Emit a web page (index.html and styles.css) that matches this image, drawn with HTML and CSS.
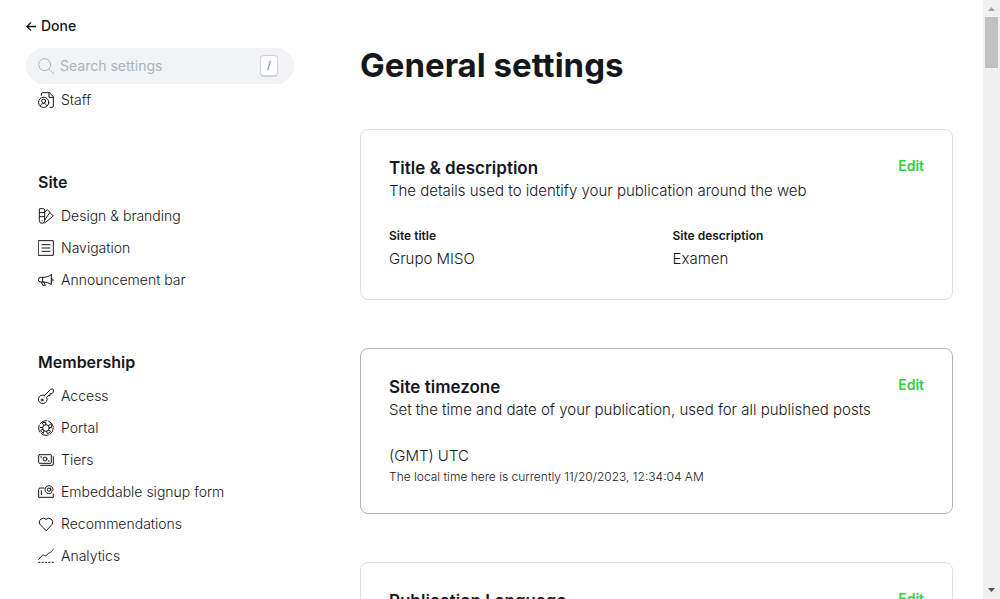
FILE: index.html
```html
<!DOCTYPE html>
<html lang="en">
<head>
<meta charset="utf-8">
<meta name="viewport" content="width=device-width, initial-scale=1">
<title>Settings</title>
<link rel="stylesheet" href="styles.css">
</head>
<body>
<div class="app">
  <aside class="sidebar">
    <button class="done" type="button">
      <svg class="done-icon" viewBox="0 0 24 24"><path d="M22 12H3M11 3L2 12l9 9"/></svg>
      Done
    </button>
    <div class="search">
      <svg class="icon search-icon" viewBox="0 0 24 24"><circle cx="10" cy="10" r="9"/><path d="M16.500 16.500L23.500 23.500"/></svg>
      <input class="search-input" type="text" placeholder="Search settings" aria-label="Search settings">
      <kbd class="key">/</kbd>
    </div>
    <nav class="nav">
      <div class="group">
        <a class="item" href="#staff"><svg class="icon" viewBox="0 0 24 24"><path d="M5 5V3a2 2 0 0 1 2-2h10l6 6v14a2 2 0 0 1-2 2h-3M16.500 1v7H23"/><circle cx="8.500" cy="15.500" r="7.700"/><circle cx="8.500" cy="13.500" r="3"/><path d="M3.500 20.500c2-4.500 8-4.500 10 0"/></svg>Staff</a>
      </div>
      <div class="group">
        <h2 class="group-title">Site</h2>
        <a class="item" href="#design"><svg class="icon" viewBox="0 0 24 24"><path d="M3 1h5a2 2 0 0 1 2 2v16a4 4 0 0 1-8 0V2zM2 7h8M2 13h8M10 6l4-3.500 4 4L10 18M18 7l5 5L10 22.500M6 19v.5"/></svg>Design &amp; branding</a>
        <a class="item" href="#navigation"><svg class="icon" viewBox="0 0 24 24"><path d="M1 1h22v22H1zM6 7h12M6 12h12M6 17h12"/></svg>Navigation</a>
        <a class="item" href="#announcement"><svg class="icon" viewBox="0 0 24 24"><path d="M20 4v15C16 16 12 15 7 15H4a3.200 3.200 0 0 1 0-7h3c5 0 9-1 13-4zM7 8v7M20 10c4 0 4 4 0 4M5 15l2 5h4l-2-4.500"/></svg>Announcement bar</a>
      </div>
      <div class="group">
        <h2 class="group-title">Membership</h2>
        <a class="item" href="#access"><svg class="icon" viewBox="0 0 24 24"><path d="M10 11L19 2q4-2 4 1v3l-2 2.500h-3v3h-3l-2 2.500a6.500 6.500 0 1 1-3-3z"/><circle cx="6" cy="18" r="1.500"/></svg>Access</a>
        <a class="item" href="#portal"><svg class="icon" viewBox="0 0 24 24"><circle cx="12" cy="12" r="11" stroke-dasharray="11 2.820"/><circle cx="12" cy="12" r="5"/><path d="M8 7L6 4.500Q9 3 12 4l-.5 3M16 8.500l3-3q2 2.500 1.500 6L17 11.500M16 15.500l3 1.500q-2 3-5 3.500L13 17M9 16.500l-1 3.500Q5 18 4 15.500l3-1.500M7 11l-3.500.5"/></svg>Portal</a>
        <a class="item" href="#tiers"><svg class="icon" viewBox="0 0 24 24"><rect x="1" y="4" width="19" height="13" rx="1"/><circle cx="10.500" cy="10.500" r="3"/><path d="M4 7.500h1.500M15.500 13.500H17M23 7v11a2 2 0 0 1-2 2H4"/></svg>Tiers</a>
        <a class="item" href="#signup"><svg class="icon" viewBox="0 0 24 24"><path d="M9 6H3a2 2 0 0 0-2 2v12h22v-5M5 10v6"/><path d="M20.500 13a6 6 0 1 1 2-4.500c0 3-3.500 3-3.500 0V6"/><circle cx="16.500" cy="8.500" r="2.500"/></svg>Embeddable signup form</a>
        <a class="item" href="#recommendations"><svg class="icon" viewBox="0 0 24 24"><path d="M12 21.800L2.500 12A6 6 0 0 1 12 5a6 6 0 0 1 9.500 7z"/></svg>Recommendations</a>
        <a class="item" href="#analytics"><svg class="icon" viewBox="0 0 24 24"><path d="M1 17l5.500-6c1-1 2-.8 3 0s2.500 1 3.500 0L15.500 8c1-1 2-.5 3-1S20.500 4 23 2M1 21.500h2M6 21.500h2M11 21.500h2M16 21.500h2M21 21.500h2"/></svg>Analytics</a>
      </div>
    </nav>
  </aside>
  <main class="content">
    <h1 class="page-title">General settings</h1>
    <section class="card">
      <header class="card-head">
        <div><h2 class="card-title">Title &amp; description</h2><p class="text">The details used to identify your publication around the web</p></div>
        <button class="edit" type="button">Edit</button>
      </header>
      <dl class="fields">
        <div><dt class="label">Site title</dt><dd class="text value">Grupo MISO</dd></div>
        <div><dt class="label">Site description</dt><dd class="text value">Examen</dd></div>
      </dl>
    </section>
    <section class="card card-active">
      <header class="card-head">
        <div><h2 class="card-title">Site timezone</h2><p class="text">Set the time and date of your publication, used for all published posts</p></div>
        <button class="edit" type="button">Edit</button>
      </header>
      <div><p class="text">(GMT) UTC</p><p class="hint">The local time here is currently 11/20/2023, 12:34:04 AM</p></div>
    </section>
    <section class="card">
      <header class="card-head">
        <div><h2 class="card-title">Publication Language</h2></div>
        <button class="edit" type="button">Edit</button>
      </header>
    </section>
  </main>
  <div class="scrollbar" aria-hidden="true">
    <svg class="arrow" viewBox="0 0 17 17"><path fill="#a3a3a3" d="M5 11l3.500-4 3.500 4z"/></svg>
    <div class="thumb"></div>
    <svg class="arrow arrow-down" viewBox="0 0 17 17"><path fill="#505050" d="M5 6h7l-3.500 4z"/></svg>
  </div>
</div>
</body>
</html>
```
FILE: styles.css
```css
* { box-sizing: border-box; }
body, h1, h2, p, dl, dd { margin: 0; }
body { font-family: Inter, "Liberation Sans", sans-serif; color: #15171a; background: #fff; }
button { border: 0; padding: 0; background: none; font: inherit; color: inherit; cursor: pointer; }
.app { display: flex; height: 100vh; overflow: hidden; }
.sidebar { flex: 0 0 294px; min-width: 0; padding: 16px 0 0 26px; }
.done { display: flex; align-items: center; gap: 4px; font-size: 14px; font-weight: 500; line-height: 20px; }
.done-icon { width: 11px; height: 11px; fill: none; stroke: currentColor; stroke-width: 3; }
.search { display: flex; align-items: center; gap: 6px; height: 36px; margin-top: 12px; padding: 0 16px 0 12px; border-radius: 18px; background: #f1f3f4; }
.icon { flex: none; width: 16px; height: 16px; fill: none; stroke: currentColor; stroke-width: 1.5; stroke-linecap: round; stroke-linejoin: round; }
.search-icon { color: #abb4be; }
.search-input { flex: 1; min-width: 0; padding: 0; border: 0; outline: 0; background: none; font: 400 14px/20px Inter, sans-serif; color: #15171a; }
.search-input::placeholder { color: #abb4be; opacity: 1; }
.key { width: 18px; height: 22px; border: 1px solid #ced4d9; border-bottom-width: 2px; border-radius: 4px; background: #fff; color: #7c8b9a; font: 500 11px/19px Inter, sans-serif; text-align: center; }
.nav { padding-left: 12px; }
.group { margin-bottom: 46px; }
.group-title { padding: 10px 0 8px; font-size: 16px; font-weight: 600; line-height: 20px; }
.item { display: flex; align-items: center; gap: 7px; height: 32px; color: #15171a; font-size: 14px; font-weight: 300; line-height: 20px; text-decoration: none; }
.content { flex: 1; min-width: 0; padding: 40px 30px 0 66px; }
.page-title { margin-bottom: 39px; font-size: 33px; font-weight: 700; line-height: 50px; }
.card { display: flex; flex-direction: column; gap: 22px; margin-bottom: 48px; padding: 28px; border: 1px solid #dddfe6; border-radius: 8px; }
.card-active { border-color: #abb4be; }
.card-head { display: flex; justify-content: space-between; align-items: flex-start; }
.card-title { font-size: 17px; font-weight: 600; line-height: 21px; }
.text { font-size: 15px; font-weight: 300; line-height: 24px; }
.edit { color: #30cf43; font-size: 14px; font-weight: 600; line-height: 16px; }
.fields { display: grid; grid-template-columns: 1fr 1fr; gap: 32px; padding-top: 2px; }
.label { font-size: 12px; font-weight: 600; line-height: 18px; }
.value { margin-top: 2px; }
.hint { font-size: 12px; font-weight: 300; line-height: 17px; }
.scrollbar { flex: 0 0 17px; display: flex; flex-direction: column; background: #f0f0f0; }
.arrow { width: 17px; height: 17px; }
.arrow-down { margin-top: auto; }
.thumb { height: 51px; margin: 0 2px; background: #c1c1c1; }
```
